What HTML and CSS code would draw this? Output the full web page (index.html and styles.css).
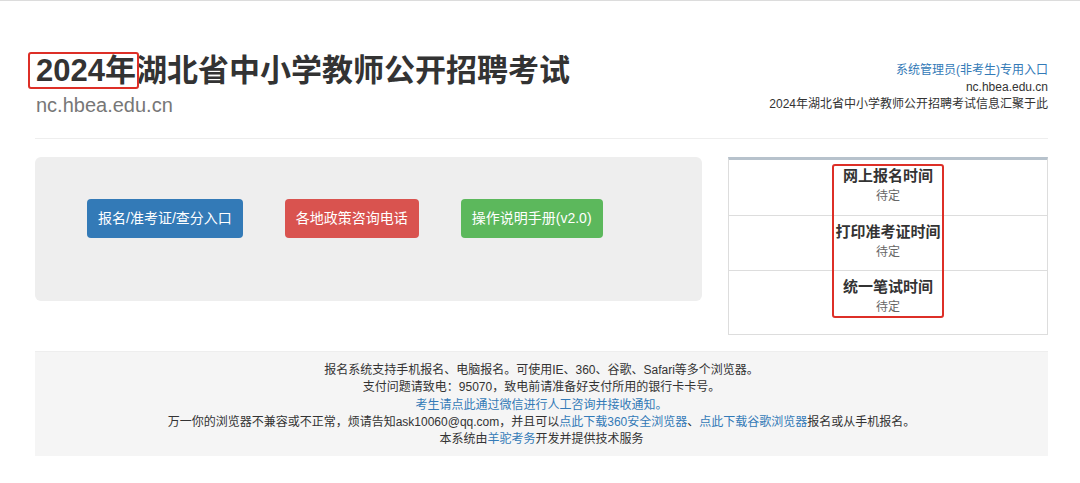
FILE: index.html
```html
<!DOCTYPE html>
<html lang="zh-CN">
<head>
    <meta charset="UTF-8">
    <title>2024年湖北省中小学教师公开招聘考试</title>
    <link rel="stylesheet" href="styles.css">
</head>
<body>
    <div class="container">
        <div class="header">
            <div class="brand">
                <h1><span class="mark">2024年</span>湖北省中小学教师公开招聘考试</h1>
                <div class="site">nc.hbea.edu.cn</div>
            </div>
            <div class="header-info">
                <a href="#">系统管理员(非考生)专用入口</a>
                <div>nc.hbea.edu.cn</div>
                <div>2024年湖北省中小学教师公开招聘考试信息汇聚于此</div>
            </div>
        </div>

        <div class="main">
            <div class="jumbotron">
                <a class="btn btn-primary" href="#">报名/准考证/查分入口</a>
                <a class="btn btn-danger" href="#">各地政策咨询电话</a>
                <a class="btn btn-success" href="#">操作说明手册(v2.0)</a>
            </div>

            <div class="schedule">
                <div class="row">
                    <div class="row-title">网上报名时间</div>
                    <div class="row-value">待定</div>
                </div>
                <div class="row">
                    <div class="row-title">打印准考证时间</div>
                    <div class="row-value">待定</div>
                </div>
                <div class="row">
                    <div class="row-title">统一笔试时间</div>
                    <div class="row-value">待定</div>
                </div>
                <div class="highlight"></div>
            </div>
        </div>

        <div class="footer">
            <p>报名系统支持手机报名、电脑报名。可使用IE、360、谷歌、Safari等多个浏览器。</p>
            <p>支付问题请致电：95070，致电前请准备好支付所用的银行卡卡号。</p>
            <p><a href="#">考生请点此通过微信进行人工咨询并接收通知。</a></p>
            <p>万一你的浏览器不兼容或不正常，烦请告知ask10060@qq.com，并且可以<a href="#">点此下载360安全浏览器</a>、<a href="#">点此下载谷歌浏览器</a>报名或从手机报名。</p>
            <p>本系统由<a href="#">羊驼考务</a>开发并提供技术服务</p>
        </div>
    </div>
</body>
</html>
```

FILE: styles.css
```css
:root {
    --link: #337ab7;
    --text: #333333;
    --muted: #777777;
}

body {
    margin: 0;
    font-family: "Liberation Sans", "Noto Sans CJK SC", sans-serif;
    font-size: 12px;
    color: var(--text);
    background: #ffffff;
    border-top: 1px solid #dcdcdc;
}

a {
    color: var(--link);
    text-decoration: none;
}

.container {
    width: 1013px;
    margin-left: 35px;
}

.header {
    display: flex;
    justify-content: space-between;
    padding: 49px 0 20px 1px;
    border-bottom: 1px solid #eeeeee;
}

h1 {
    margin: 0;
    font-size: 31px;
    line-height: 42px;
    font-weight: bold;
    color: #333333;
}

/* red annotation box around the year */
.mark {
    position: relative;
}

.mark::after {
    content: "";
    position: absolute;
    left: -8px;
    right: -3px;
    top: -1px;
    bottom: -1px;
    border: 2px solid #dd2f27;
    border-radius: 3px;
}

.site {
    font-size: 20px;
    line-height: 26px;
    color: var(--muted);
}

.header-info {
    padding-top: 12px;
    text-align: right;
    line-height: 17px;
}

.header-info a {
    display: block;
}

.main {
    display: flex;
    justify-content: space-between;
    margin-top: 18px;
}

.jumbotron {
    width: 667px;
    height: 144px;
    box-sizing: border-box;
    padding: 42px 0 0 52px;
    display: flex;
    align-items: flex-start;
    gap: 42px;
    background: #eeeeee;
    border-radius: 6px;
}

.btn {
    display: block;
    height: 39px;
    line-height: 39px;
    padding: 0 11px;
    font-size: 14px;
    color: #ffffff;
    border-radius: 4px;
}

.btn-primary { background: #337ab7; }
.btn-danger { background: #d9534f; }
.btn-success { background: #5cb85c; }

.schedule {
    position: relative;
    width: 320px;
    box-sizing: border-box;
    border: 1px solid #dddddd;
    border-top: 3px solid #b7c2cc;
    padding-bottom: 9px;
}

.row {
    height: 55px;
    box-sizing: border-box;
    padding-top: 5px;
    text-align: center;
}

.row + .row {
    border-top: 1px solid #dddddd;
}

.row-title {
    font-size: 15px;
    font-weight: bold;
    line-height: 21px;
}

.row-value {
    line-height: 20px;
    color: #666666;
}

.highlight {
    position: absolute;
    left: 103px;
    top: 4px;
    width: 112px;
    height: 154px;
    box-sizing: border-box;
    border: 2px solid #dd2f27;
    border-radius: 3px;
}

.footer {
    margin-top: 16px;
    padding: 10px 0 8px;
    background: #f5f5f5;
    border-top: 1px solid #eeeeee;
    text-align: center;
    line-height: 17.3px;
}

.footer p {
    margin: 0;
}
```
